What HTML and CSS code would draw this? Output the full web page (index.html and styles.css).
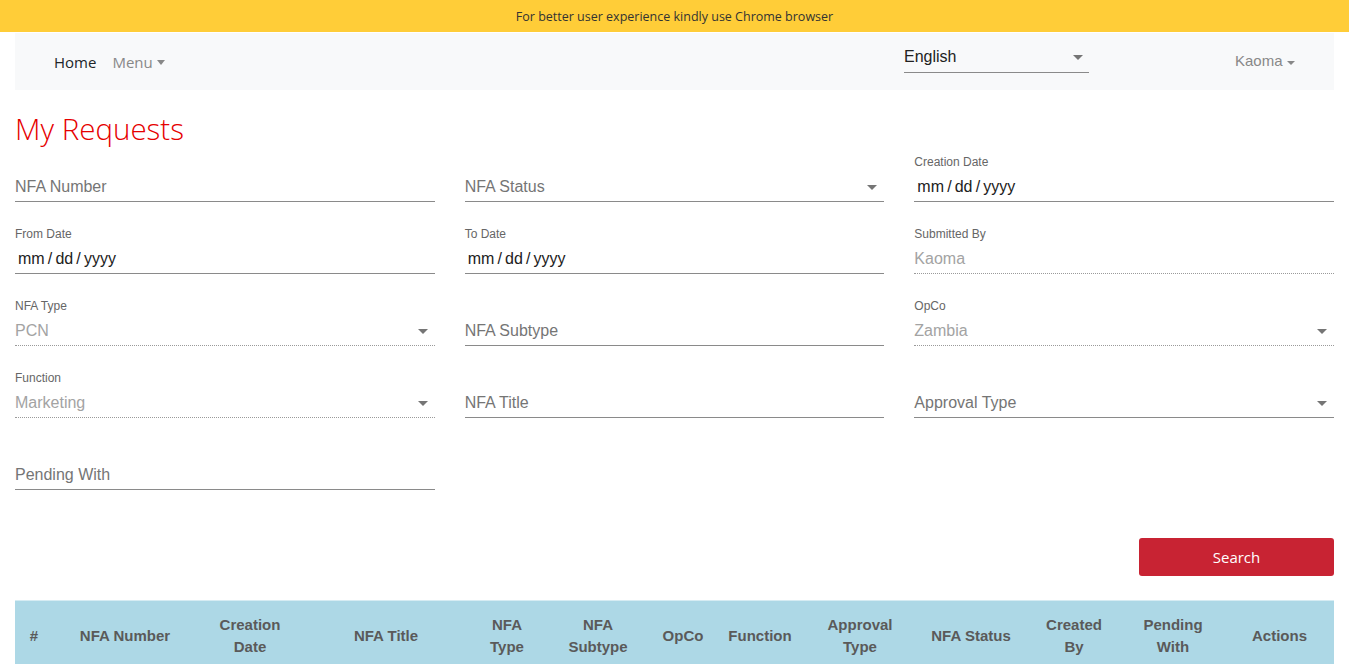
FILE: index.html
```html
<!DOCTYPE html>
<html lang="en">
<head>
<meta charset="utf-8">
<title>My Requests</title>
<link rel="stylesheet" href="styles.css">
</head>
<body>
<div class="page">
  <div class="banner">For better user experience kindly use Chrome browser</div>
  <nav class="navbar">
    <div class="nav-left">
      <a class="nav-link active">Home</a>
      <a class="nav-link dropdown">Menu<span class="caret"></span></a>
    </div>
    <div class="nav-right">
      <div class="lang-select">English<span class="caret-dark"></span></div>
      <div class="user">Kaoma<span class="caret small"></span></div>
    </div>
  </nav>

  <main class="content">
    <h1 class="title">My Requests</h1>

    <div class="form-grid">
      <div class="field">
        <div class="label"></div>
        <div class="control placeholder">NFA Number</div>
      </div>
      <div class="field">
        <div class="label"></div>
        <div class="control placeholder select">NFA Status<span class="sel-caret"></span></div>
      </div>
      <div class="field">
        <div class="label">Creation Date</div>
        <div class="control value date">mm / dd / yyyy</div>
      </div>

      <div class="field">
        <div class="label">From Date</div>
        <div class="control value date">mm / dd / yyyy</div>
      </div>
      <div class="field">
        <div class="label">To Date</div>
        <div class="control value date">mm / dd / yyyy</div>
      </div>
      <div class="field">
        <div class="label">Submitted By</div>
        <div class="control disabled">Kaoma</div>
      </div>

      <div class="field">
        <div class="label">NFA Type</div>
        <div class="control disabled select">PCN<span class="sel-caret"></span></div>
      </div>
      <div class="field">
        <div class="label"></div>
        <div class="control placeholder">NFA Subtype</div>
      </div>
      <div class="field">
        <div class="label">OpCo</div>
        <div class="control disabled select">Zambia<span class="sel-caret"></span></div>
      </div>

      <div class="field">
        <div class="label">Function</div>
        <div class="control disabled select">Marketing<span class="sel-caret"></span></div>
      </div>
      <div class="field">
        <div class="label"></div>
        <div class="control placeholder">NFA Title</div>
      </div>
      <div class="field">
        <div class="label"></div>
        <div class="control placeholder select">Approval Type<span class="sel-caret"></span></div>
      </div>

      <div class="field">
        <div class="label"></div>
        <div class="control placeholder">Pending With</div>
      </div>
    </div>

    <div class="actions">
      <button class="btn-search" type="button">Search</button>
    </div>

    <table class="results">
      <thead>
        <tr>
          <th class="c-idx">#</th>
          <th class="c-num">NFA Number</th>
          <th class="c-date">Creation<br>Date</th>
          <th class="c-title">NFA Title</th>
          <th class="c-type">NFA<br>Type</th>
          <th class="c-sub">NFA<br>Subtype</th>
          <th class="c-opco">OpCo</th>
          <th class="c-func">Function</th>
          <th class="c-appr">Approval<br>Type</th>
          <th class="c-status">NFA Status</th>
          <th class="c-by">Created<br>By</th>
          <th class="c-pend">Pending<br>With</th>
          <th class="c-act">Actions</th>
        </tr>
      </thead>
    </table>
  </main>
</div>
</body>
</html>
```
FILE: styles.css
```css
* { box-sizing: border-box; }

html, body {
  margin: 0;
  padding: 0;
  background: #ffffff;
}

body {
  font-family: "Liberation Sans", Arial, sans-serif;
  color: #212529;
}

.page {
  width: 1349px;
}

.banner {
  height: 32px;
  background: #ffcd38;
  color: #333333;
  font-family: "Open Sans", "Noto Sans", sans-serif;
  font-size: 12.5px;
  line-height: 30px;
  padding-top: 2px;
  text-align: center;
}

.navbar {
  margin: 1px 15px 0 15px;
  height: 57px;
  background: #f8f9fa;
  display: flex;
  align-items: center;
  justify-content: space-between;
  padding: 0 0 0 31px;
}

.nav-left {
  display: flex;
  align-items: center;
}

.nav-link {
  font-family: "Open Sans", "Noto Sans", sans-serif;
  font-size: 15px;
  color: #888888;
  padding: 0 8px;
  display: flex;
  align-items: center;
}

.nav-link.active {
  color: #212529;
}

.caret {
  display: inline-block;
  margin-left: 4px;
  margin-top: 1px;
  border-left: 4px solid transparent;
  border-right: 4px solid transparent;
  border-top: 5px solid #888888;
}

.caret.small {
  border-left-width: 4px;
  border-right-width: 4px;
  border-top-width: 4px;
  margin-top: 4px;
}

.nav-right {
  display: flex;
  align-items: center;
  height: 100%;
}

.lang-select {
  width: 185px;
  height: 31px;
  border-bottom: 1px solid #8a8a8a;
  font-size: 16px;
  line-height: 20px;
  color: #212121;
  display: flex;
  justify-content: space-between;
  align-items: center;
  margin-top: -8px;
  padding-right: 6px;
}

.caret-dark {
  border-left: 5px solid transparent;
  border-right: 5px solid transparent;
  border-top: 5px solid #757575;
}

.user {
  margin-left: 146px;
  width: 99px;
  font-size: 15px;
  color: #888888;
  display: flex;
  align-items: center;
  margin-top: -2px;
}

.content {
  padding: 0 15px;
}

.title {
  margin: 21px 0 8px 0;
  font-family: "Open Sans", "Noto Sans", sans-serif;
  font-weight: 300;
  font-size: 29.5px;
  line-height: 36px;
  color: #e60000;
}

.form-grid {
  display: grid;
  grid-template-columns: repeat(3, 1fr);
  column-gap: 30px;
  row-gap: 25px;
}

.field {
  display: flex;
  flex-direction: column;
}

.label {
  height: 14px;
  line-height: 14px;
  font-size: 12px;
  color: #666666;
  margin-bottom: 2px;
}

.control {
  position: relative;
  height: 31px;
  padding-top: 1px;
  line-height: 29px;
  font-size: 16px;
  border-bottom: 1px solid #8a8a8a;
}

.control.placeholder {
  color: #757575;
}

.control.value {
  color: #212121;
}

.control.date {
  padding-left: 3px;
  word-spacing: -1.3px;
}

.control.disabled {
  color: #a3a3a3;
  border-bottom: 1px dotted #9a9a9a;
}

.sel-caret {
  position: absolute;
  right: 7px;
  top: 14px;
  border-left: 5px solid transparent;
  border-right: 5px solid transparent;
  border-top: 5px solid #757575;
}

.actions {
  display: flex;
  justify-content: flex-end;
  margin-top: 48px;
}

.btn-search {
  width: 195px;
  height: 38px;
  border: none;
  border-radius: 3px;
  background: #c82333;
  color: #ffffff;
  font-family: "Open Sans", "Noto Sans", sans-serif;
  font-size: 15px;
}

.results {
  margin-top: 24px;
  width: 100%;
  border-collapse: collapse;
  table-layout: fixed;
}

.results th {
  background: #add8e6;
  border-top: 1px solid #d6ecf3;
  color: #5a5a5a;
  font-family: "Liberation Sans", Arial, sans-serif;
  font-weight: bold;
  font-size: 15px;
  line-height: 22px;
  padding: 13px 2px 11px 2px;
  text-align: center;
  vertical-align: middle;
}

.c-idx { width: 38px; }
.c-num { width: 144px; }
.c-date { width: 106px; }
.c-title { width: 166px; }
.c-type { width: 76px; }
.c-sub { width: 106px; }
.c-opco { width: 64px; }
.c-func { width: 90px; }
.c-appr { width: 110px; }
.c-status { width: 112px; }
.c-by { width: 94px; }
.c-pend { width: 104px; }
.c-act { width: auto; }
```
